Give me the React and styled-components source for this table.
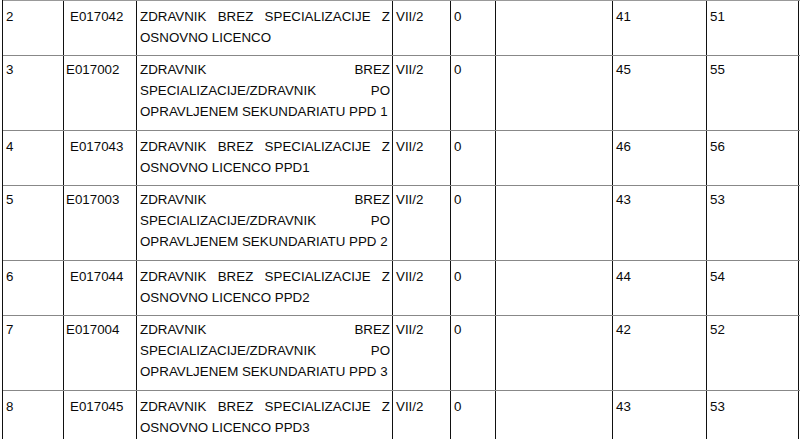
import React from "react";
import styled, { createGlobalStyle } from "styled-components";

const Global = createGlobalStyle`
  html, body { margin: 0; padding: 0; background: #fff; }
  body { font-family: "Liberation Sans", Arial, sans-serif; }
`;

const Table = styled.div`
  margin-left: 2px;
  width: 797px;
  border-left: 1px solid #111;
  color: #0a0a0a;
  font-family: "Liberation Sans", Arial, sans-serif;
  font-size: 13.33px;
  line-height: 21px;
`;

const Row = styled.div`
  display: grid;
  grid-template-columns: 61px 73px 256px 58px 45px 117px 94px 92px;
  border-top: 1px solid #888;
  border-bottom: 1px solid #111;
  margin-top: -1px;
  &:first-child { margin-top: 0; border-top: 1px solid #999; }
`;

const Cell = styled.div`
  box-sizing: border-box;
  border-right: 1px solid #111;
  padding: ${(p) => (p.$tall ? "3px" : "5px")} 2px
    ${(p) => (p.$tall ? "8px" : "7px")} ${(p) => p.$indent ?? 3}px;
  white-space: nowrap;
`;

const DescCell = styled(Cell)`
  white-space: normal;
  text-align: justify;
  padding-right: 2px;
`;

const rows = [
  { n: "2", code: "E017042", desc: "ZDRAVNIK BREZ SPECIALIZACIJE Z OSNOVNO LICENCO", a: "41", b: "51" },
  { n: "3", code: "E017002", desc: "ZDRAVNIK BREZ SPECIALIZACIJE/ZDRAVNIK PO OPRAVLJENEM SEKUNDARIATU PPD 1", a: "45", b: "55", tall: true },
  { n: "4", code: "E017043", desc: "ZDRAVNIK BREZ SPECIALIZACIJE Z OSNOVNO LICENCO PPD1", a: "46", b: "56" },
  { n: "5", code: "E017003", desc: "ZDRAVNIK BREZ SPECIALIZACIJE/ZDRAVNIK PO OPRAVLJENEM SEKUNDARIATU PPD 2", a: "43", b: "53", tall: true },
  { n: "6", code: "E017044", desc: "ZDRAVNIK BREZ SPECIALIZACIJE Z OSNOVNO LICENCO PPD2", a: "44", b: "54" },
  { n: "7", code: "E017004", desc: "ZDRAVNIK BREZ SPECIALIZACIJE/ZDRAVNIK PO OPRAVLJENEM SEKUNDARIATU PPD 3", a: "42", b: "52", tall: true },
  { n: "8", code: "E017045", desc: "ZDRAVNIK BREZ SPECIALIZACIJE Z OSNOVNO LICENCO PPD3", a: "43", b: "53" },
];

export default function App() {
  return (
    <>
      <Global />
      <Table>
        {rows.map((r) => (
          <Row key={r.n}>
            <Cell $tall={r.tall}>{r.n}</Cell>
            <Cell $tall={r.tall} $indent={r.tall ? 2 : 6}>{r.code}</Cell>
            <DescCell $tall={r.tall}>{r.desc}</DescCell>
            <Cell $tall={r.tall}>VII/2</Cell>
            <Cell $tall={r.tall}>0</Cell>
            <Cell $tall={r.tall}></Cell>
            <Cell $tall={r.tall}>{r.a}</Cell>
            <Cell $tall={r.tall}>{r.b}</Cell>
          </Row>
        ))}
      </Table>
    </>
  );
}
